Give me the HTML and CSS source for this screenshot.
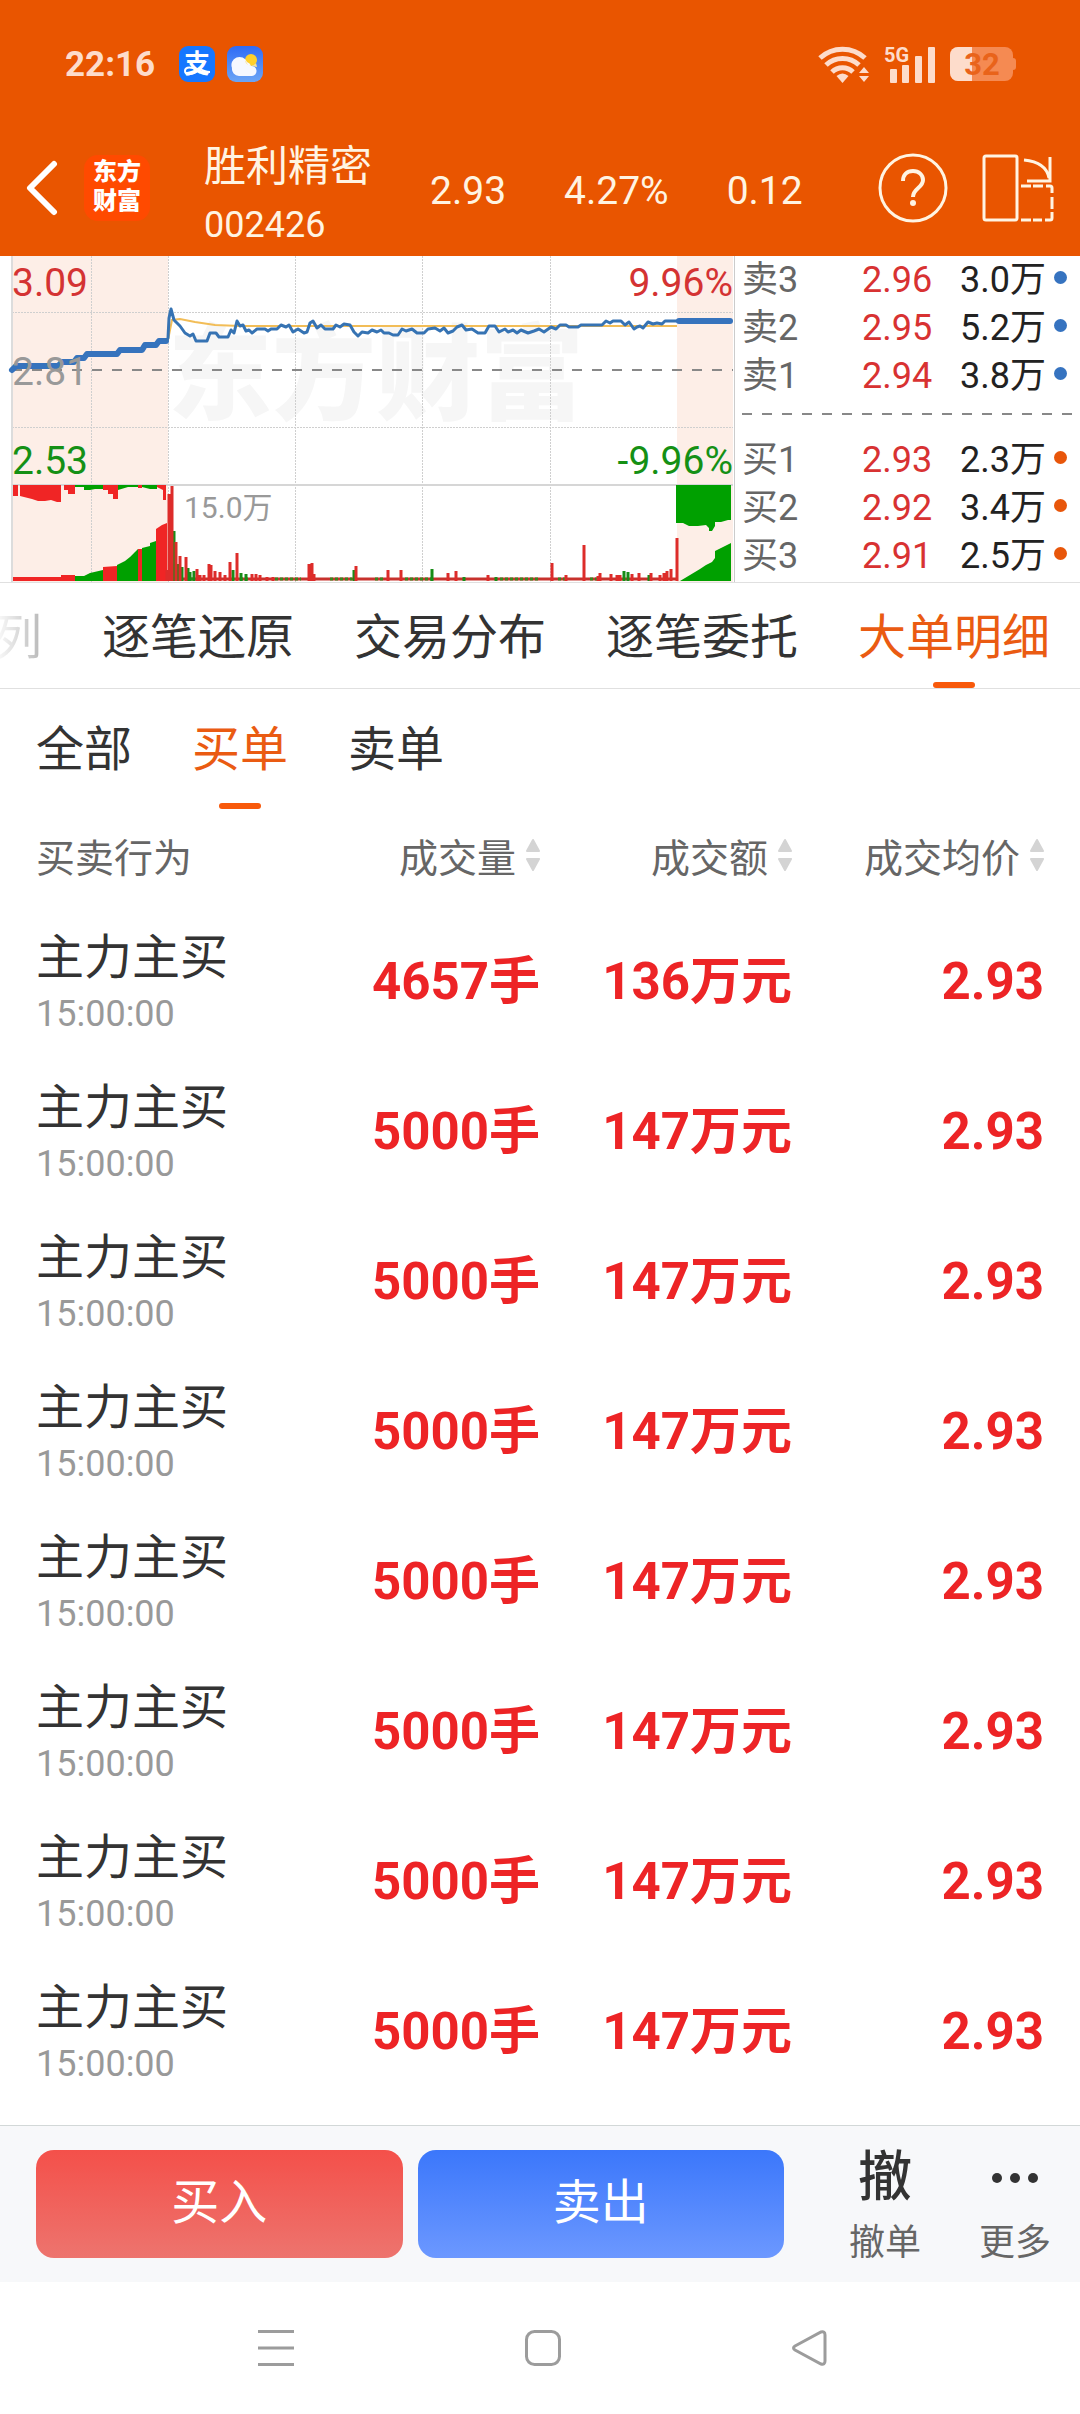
FILE: index.html
```html
<!DOCTYPE html>
<html lang="zh-CN">
<head>
  <meta charset="UTF-8">
  <meta name="viewport" content="width=device-width, initial-scale=1.0">
  <title>胜利精密 002426</title>
  <link rel="stylesheet" href="styles.css">
</head>
<body>

  <!-- 状态栏 -->
  <div class="status-bar">
    <span class="clock">22:16</span>
    <svg class="app-icon" viewBox="0 0 36 36" aria-hidden="true">
      <rect width="36" height="36" rx="9" fill="#1677ff"/>
      <text class="pay-mark" x="18" y="27" text-anchor="middle">支</text>
      <path d="M17 24c-3-3-11-4-11 1 0 5 9 4 14-2M20 22c4 3 7 4 11 4" fill="none" stroke="#fff" stroke-width="2"/>
    </svg>
    <svg class="app-icon" viewBox="0 0 36 36" aria-hidden="true">
      <defs>
        <linearGradient id="sky" x1="0" y1="0" x2="0" y2="1">
          <stop offset="0" stop-color="#2f6bf6"/>
          <stop offset="1" stop-color="#6ba5f5"/>
        </linearGradient>
      </defs>
      <rect width="36" height="36" rx="9" fill="url(#sky)"/>
      <circle cx="24" cy="14" r="6" fill="#ffd02c"/>
      <path d="M12 30a7 7 0 0 1-7-8 8 8 0 0 1 15-6 6 6 0 0 1 4 4 5 5 0 0 1 1 10z" fill="#f5f8ff"/>
      <path d="M18 14a6 6 0 0 0 11 3l1 4-5-1-4-1z" fill="#fbe49b"/>
    </svg>
    <div class="status-right">
      <svg width="52" height="38" viewBox="0 0 52 38" fill="none" stroke="#fddccb" stroke-width="5" stroke-linecap="butt" aria-hidden="true">
        <path d="M2 13a33 33 0 0 1 45 0"/>
        <path d="M8 20a24 24 0 0 1 33 0"/>
        <path d="M14 27a15 15 0 0 1 21 0"/>
        <path d="M24.500 38l-6-7q6-5 12 0z" fill="#fddccb" stroke="none"/>
        <path d="M46 22l5 6h-10zM46 37l5-6h-10z" fill="#fddccb" stroke="none"/>
      </svg>
      <svg class="signal" width="52" height="38" viewBox="0 0 52 38" fill="#fddccb" aria-hidden="true">
        <text class="net-mark" x="0" y="17">5G</text>
        <rect x="6" y="24" width="7" height="14" rx="1"/>
        <rect x="18" y="20" width="7" height="18" rx="1"/>
        <rect x="31" y="11" width="7" height="27" rx="1"/>
        <rect x="44" y="2" width="7" height="36" rx="1"/>
      </svg>
      <svg class="battery" width="66" height="34" viewBox="0 0 66 34" aria-hidden="true">
        <rect width="63" height="34" rx="8" fill="#f58a52"/>
        <path d="M63 11q3 0 3 3v6q0 3-3 3z" fill="#f58a52"/>
        <path d="M8 0h14v34H8a8 8 0 0 1-8-8V8a8 8 0 0 1 8-8z" fill="#fddccb"/>
        <text class="battery-text" x="32" y="28" text-anchor="middle">32</text>
      </svg>
    </div>
  </div>

  <!-- 顶部标题 -->
  <header class="header">
    <button class="icon-btn" aria-label="返回">
      <svg width="32" height="56" viewBox="0 0 32 56" fill="none" stroke="#fff" stroke-width="6" stroke-linecap="round" stroke-linejoin="round">
        <path d="M28 4L4 28l24 24"/>
      </svg>
    </button>
    <div class="logo">东方<br>财富</div>
    <div class="stock">
      <h1 class="stock-name">胜利精密</h1>
      <span class="stock-code">002426</span>
    </div>
    <div class="quote">
      <span>2.93</span>
      <span>4.27%</span>
      <span>0.12</span>
    </div>
    <div class="header-tools">
      <button class="icon-btn" aria-label="帮助">
        <svg width="70" height="70" viewBox="0 0 70 70" fill="none" stroke="#fff4e2" stroke-width="3">
          <circle cx="35" cy="35" r="33"/>
          <path d="M25 28c0-6 4-10 10-10s10 4 10 9c0 8-10 8-10 17" stroke-width="4"/>
          <circle cx="35" cy="50" r="3" fill="#fff4e2" stroke="none"/>
        </svg>
      </button>
      <button class="icon-btn" aria-label="横屏">
        <svg width="72" height="68" viewBox="0 0 72 68" fill="none" stroke="#fff4e2" stroke-width="3">
          <rect x="2" y="2" width="33" height="64" rx="2"/>
          <path d="M42 6q22 2 25 18M68 3v24H45"/>
          <path d="M39 32h10M51 32h10M64 32h4q2 0 2 2v5M70 43v12M70 58v6q0 2-2 2h-5M39 66h10M51 66h9"/>
        </svg>
      </button>
    </div>
  </header>

  <!-- 分时图和盘口 -->
  <section class="market">
    <svg class="chart" viewBox="0 0 734 326" role="img" aria-label="分时图">
      <rect x="12" y="0" width="156" height="326" fill="#fdeee7"/>
      <rect x="677" y="0" width="56" height="326" fill="#fdeee7"/>
      <text class="watermark" x="168" y="156">东方财富</text>

      <path d="M12 56.500H733M12 171.500H733M91.500 0V326M168.500 0V326M295.500 0V326M422.500 0V326M550.500 0V326" stroke="#cfcfcf" stroke-dasharray="2 1" fill="none"/>
      <path d="M12 0V326" stroke="#dcdcdc" stroke-width="2"/>
      <path d="M12 229H733" stroke="#d6d6d6" stroke-width="2"/>
      <path d="M12 114H733" stroke="#888" stroke-width="2" stroke-dasharray="10 10"/>

      <!-- 均价线 -->
      <path d="M168 84L172 64L180 63L195 66L215 69L240 70H677" fill="none" stroke="#f2bd57" stroke-width="2"/>
      <!-- 价格线 -->
      <path d="M12 114L16 110H58L62 106H74L77 102H84L87 98H117L120 94H142L145 89H156L159 85H166" fill="none" stroke="#3673bd" stroke-width="6" stroke-linejoin="round" stroke-linecap="round"/>
      <path d="M166 85L168 82L169 62L171 53L174 64L180 70L185 77L190 80L193 78L196 85H207L210 77H216L219 81H228L231 74L234 77L237 65L240 70L243 69L246 75L249 74L252 77L257 73H265L268 75L271 73H277L281 69L286 71L289 69L293 76L298 73L304 77L307 76L310 67L313 65L317 72L321 69L325 73H333L336 69L340 71L344 68L350 69L354 76L358 80L362 76L368 77L372 74L377 76L381 74L384 77H389L393 79H398L402 73L406 75L412 73L417 77H424L428 73L435 72L440 75L444 72L448 77L453 75L457 71L462 69L466 74L472 73L478 77H485L489 70H495L499 76L505 73L508 76L513 74L517 77L521 74L528 77L534 75L539 73L544 76L551 71L556 73L560 69H566L569 71H578L581 69H602L606 65L610 67L613 65H621L625 69L629 66L634 73L637 71L640 70L643 72L648 66L653 68L657 67L662 68L665 65H677" fill="none" stroke="#3673b3" stroke-width="3" stroke-linejoin="round"/>
      <path d="M679 65H730" stroke="#3673bd" stroke-width="6" stroke-linecap="round"/>

      <!-- 集合竞价：未匹配量 -->
      <path d="M13 229H18V240H13zM20 229H61V246H57L51 244L45 245H38L32 243L20 240zM64 229H75V238H68V234H64zM103 229H118V243H113V238H108V234H103zM138 229H142V232H138zM157 229H166V244H163V234L157 231z" fill="#f02525"/>
      <path d="M75 229H103V233H95L90 234H84V231H75zM118 229H138V231H128L118 234zM142 229H157V233H150L142 231zM676 229H731V264H728L721 266H715V270L712 275H709V272L706 269L698 270H689L683 267H676z" fill="#00a000"/>
      <!-- 成交量 -->
      <path d="M13 325V321H61V319H75V325zM103 325V311L117 310V325zM138 325V293H142V325zM156 325V273L162 269L167 267V325z" fill="#f02525"/>
      <path d="M75 325V320H84L90 317L103 314V325zM117 325V309L125 305L130 301L135 296L138 293V325zM142 325V292L150 290V287L156 285V325zM680 325L690 319L700 313L706 309L712 306L715 302V295L721 292L731 287V325z" fill="#00a000"/>
      <path d="M175 323H676" stroke="#c7322d" stroke-width="3"/>
      <path d="M191 323H197M240 323H250M275 323H301M330 323H352M375 323H384M405 323H431M500 323H540M558 323H566M590 323H598" stroke="#39861f" stroke-width="3" stroke-dasharray="3 2"/>
      <path d="M174 325V275M178 325V308M182 325V311M188 325V312M190 325V316M194 325V315M233 325V314M241 325V317M246 325V318M354 325V314M432 325V313M464 325V321M496 325V321M624 325V315M628 325V316M649 325V319" stroke="#178c17" stroke-width="3"/>
      <path d="M167 325V314M169 325V238M172 325V230M176 325V286M180 325V300M186 325V301M197 325V313M200 325V319M204 325V319M209 325V308M211 325V309M215 325V315M220 325V316M225 325V319M230 325V306M237 325V297M252 325V318M256 325V318M260 325V319M267 325V321M273 325V321M309 325V308M312 325V307M314 325V318M356 325V310M388 325V314M401 325V314M448 325V317M456 325V315M488 325V319M552 325V307M566 325V319M584 325V289M598 325V320M600 325V317M611 325V318M617 325V319M620 325V319M632 325V318M639 325V317M651 325V317M660 325V319M664 325V317M667 325V315M671 325V313M677 325V282" stroke="#dd2c2a" stroke-width="3"/>

      <text class="axis up" x="12" y="40">3.09</text>
      <text class="axis flat" x="12" y="129">2.81</text>
      <text class="axis down" x="12" y="218">2.53</text>
      <text class="axis up" x="733" y="40" text-anchor="end">9.96%</text>
      <text class="axis down" x="733" y="218" text-anchor="end">-9.96%</text>
      <text class="axis-small" x="184" y="262">15.0万</text>
    </svg>

    <div class="book">
      <div class="book-row"><span class="side">卖3</span><span class="price">2.96</span><span class="vol">3.0万</span><i class="dot sell"></i></div>
      <div class="book-row"><span class="side">卖2</span><span class="price">2.95</span><span class="vol">5.2万</span><i class="dot sell"></i></div>
      <div class="book-row"><span class="side">卖1</span><span class="price">2.94</span><span class="vol">3.8万</span><i class="dot sell"></i></div>
      <div class="book-split"></div>
      <div class="book-row"><span class="side">买1</span><span class="price">2.93</span><span class="vol">2.3万</span><i class="dot buy"></i></div>
      <div class="book-row"><span class="side">买2</span><span class="price">2.92</span><span class="vol">3.4万</span><i class="dot buy"></i></div>
      <div class="book-row"><span class="side">买3</span><span class="price">2.91</span><span class="vol">2.5万</span><i class="dot buy"></i></div>
    </div>
  </section>

  <!-- 一级标签 -->
  <nav class="tabs">
    <a href="#" class="tab faded">列</a>
    <a href="#" class="tab">逐笔还原</a>
    <a href="#" class="tab">交易分布</a>
    <a href="#" class="tab">逐笔委托</a>
    <a href="#" class="tab active">大单明细</a>
  </nav>

  <!-- 二级标签 -->
  <nav class="subtabs">
    <a href="#" class="tab">全部</a>
    <a href="#" class="tab active">买单</a>
    <a href="#" class="tab">卖单</a>
  </nav>

  <main class="content">
    <table class="orders">
      <thead>
        <tr>
          <th>买卖行为</th>
          <th><button class="sort">成交量<svg width="14" height="34" viewBox="0 0 14 34"><path d="M7 2l6 11H1zM7 32l6-11H1z"/></svg></button></th>
          <th><button class="sort">成交额<svg width="14" height="34" viewBox="0 0 14 34"><path d="M7 2l6 11H1zM7 32l6-11H1z"/></svg></button></th>
          <th><button class="sort">成交均价<svg width="14" height="34" viewBox="0 0 14 34"><path d="M7 2l6 11H1zM7 32l6-11H1z"/></svg></button></th>
        </tr>
      </thead>
      <tbody>
        <tr>
          <td><div class="action">主力主买</div><div class="time">15:00:00</div></td>
          <td>4657手</td>
          <td>136万元</td>
          <td>2.93</td>
        </tr>
        <tr>
          <td><div class="action">主力主买</div><div class="time">15:00:00</div></td>
          <td>5000手</td>
          <td>147万元</td>
          <td>2.93</td>
        </tr>
        <tr>
          <td><div class="action">主力主买</div><div class="time">15:00:00</div></td>
          <td>5000手</td>
          <td>147万元</td>
          <td>2.93</td>
        </tr>
        <tr>
          <td><div class="action">主力主买</div><div class="time">15:00:00</div></td>
          <td>5000手</td>
          <td>147万元</td>
          <td>2.93</td>
        </tr>
        <tr>
          <td><div class="action">主力主买</div><div class="time">15:00:00</div></td>
          <td>5000手</td>
          <td>147万元</td>
          <td>2.93</td>
        </tr>
        <tr>
          <td><div class="action">主力主买</div><div class="time">15:00:00</div></td>
          <td>5000手</td>
          <td>147万元</td>
          <td>2.93</td>
        </tr>
        <tr>
          <td><div class="action">主力主买</div><div class="time">15:00:00</div></td>
          <td>5000手</td>
          <td>147万元</td>
          <td>2.93</td>
        </tr>
        <tr>
          <td><div class="action">主力主买</div><div class="time">15:00:00</div></td>
          <td>5000手</td>
          <td>147万元</td>
          <td>2.93</td>
        </tr>
      </tbody>
    </table>
  </main>

  <!-- 底部交易栏 -->
  <footer class="trade-bar">
    <div class="trade-buttons">
      <button class="trade-btn buy-btn">买入</button>
      <button class="trade-btn sell-btn">卖出</button>
    </div>
    <button class="tool">
      <span class="tool-icon">撤</span>
      <span class="tool-label">撤单</span>
    </button>
    <button class="tool">
      <span class="tool-icon">
        <svg width="46" height="10" viewBox="0 0 46 10" fill="#333"><circle cx="5" cy="5" r="5"/><circle cx="23" cy="5" r="5"/><circle cx="41" cy="5" r="5"/></svg>
      </span>
      <span class="tool-label">更多</span>
    </button>
  </footer>

  <!-- 系统导航 -->
  <div class="system-nav">
    <button class="icon-btn" aria-label="最近任务">
      <svg width="36" height="38" viewBox="0 0 36 38" stroke="#9c9c9c" stroke-width="3"><path d="M0 2.500h36M0 19h36M0 35.500h36"/></svg>
    </button>
    <button class="icon-btn" aria-label="主屏幕">
      <svg width="36" height="38" viewBox="0 0 36 38" fill="none" stroke="#9c9c9c" stroke-width="3"><rect x="1.500" y="2.500" width="33" height="33" rx="8"/></svg>
    </button>
    <button class="icon-btn" aria-label="返回上一页">
      <svg width="36" height="38" viewBox="0 0 36 38" fill="none" stroke="#9c9c9c" stroke-width="3"><path d="M3 17L29 3q4-1 4 3v26q0 4-4 3L3 21q-3-2 0-4z"/></svg>
    </button>
  </div>

</body>
</html>
```
FILE: styles.css
```css
* {
  box-sizing: border-box;
}

body {
  margin: 0;
  min-height: 100vh;
  display: flex;
  flex-direction: column;
  background-color: #fff;
  color: #333;
  font-family: Roboto, 'Noto Sans CJK SC', sans-serif;
}

button {
  padding: 0;
  border: none;
  background: none;
  color: inherit;
  font: inherit;
  cursor: pointer;
}

a {
  color: inherit;
  text-decoration: none;
}

svg {
  display: block;
}

/* 状态栏 */
.status-bar {
  display: flex;
  align-items: center;
  height: 120px;
  padding: 8px 64px 0 65px;
  background-color: #e95500;
}

.clock {
  margin-right: 24px;
  color: #fddccb;
  font-size: 35px;
  font-weight: 700;
}

.app-icon {
  width: 36px;
  height: 36px;
  margin-right: 12px;
}

.pay-mark {
  fill: #fff;
  font-size: 26px;
  font-weight: 700;
}

.status-right {
  display: flex;
  align-items: center;
  gap: 14px;
  margin-left: auto;
}

.signal,
.battery {
  overflow: visible;
}

.net-mark {
  font-size: 20px;
  font-weight: 700;
}

.battery-text {
  fill: #e9631a;
  font-size: 31px;
  font-weight: 700;
}

/* 顶部标题 */
.header {
  display: flex;
  align-items: center;
  height: 136px;
  padding: 0 26px;
  background-color: #e95500;
  color: #fff4e2;
}

.logo {
  width: 66px;
  height: 66px;
  margin-left: 26px;
  padding-top: 3px;
  border-radius: 14px;
  background-color: #ff4a00;
  color: #fff;
  font-size: 24px;
  font-weight: 900;
  line-height: 29px;
  text-align: center;
}

.stock {
  display: flex;
  flex-direction: column;
  margin-left: 54px;
  padding-top: 18px;
}

.stock-name {
  margin: 0;
  font-size: 42px;
  font-weight: 400;
  line-height: 56px;
}

.stock-code {
  font-size: 36px;
  line-height: 60px;
}

.quote {
  flex: 1;
  display: flex;
  gap: 58px;
  margin-left: 58px;
  padding-top: 5px;
  font-size: 39px;
}

.header-tools {
  display: flex;
  align-items: center;
  gap: 34px;
}

/* 行情 */
.market {
  display: grid;
  grid-template-columns: 734fr 346fr;
  border-bottom: 1px solid #e0e0e0;
}

.chart {
  width: 100%;
  height: auto;
}

.watermark {
  fill: #f6f6f6;
  font-size: 104px;
  font-weight: 900;
}

.axis {
  font-size: 39px;
}

.axis-small {
  fill: #999;
  font-size: 30px;
}

.up {
  fill: #d43333;
}

.down {
  fill: #159015;
}

.flat {
  fill: #999;
}

.book {
  padding-left: 7px;
  border-left: 1px solid #ccc;
  font-size: 36px;
  line-height: 48px;
}

.book-row {
  display: grid;
  grid-template-columns: 1fr 98px 94px 26px;
  align-items: center;
  height: 48px;
}

.side {
  color: #666;
}

.price {
  color: #d83232;
}

.vol {
  color: #222;
}

.dot {
  width: 13px;
  height: 13px;
  margin-bottom: 6px;
  border-radius: 50%;
}

.sell {
  background-color: #3673c0;
}

.buy {
  background-color: #e8560a;
}

.book-split {
  height: 36px;
  margin-right: 8px;
  background: repeating-linear-gradient(to right, #888 0 10px, transparent 10px 20px) 0 13px / 100% 2px no-repeat;
}

/* 标签 */
.tabs,
.subtabs {
  display: flex;
  gap: 60px;
  font-size: 48px;
  white-space: nowrap;
}

.tabs {
  justify-content: flex-end;
  padding: 4px 30px 0 0;
  overflow: hidden;
  border-bottom: 1px solid #e0e0e0;
  line-height: 101px;
}

.subtabs {
  padding: 2px 0 0 36px;
  line-height: 118px;
}

.tab {
  position: relative;
  flex: none;
}

.tab.active {
  color: #ea5b12;
}

.tab.active::after {
  content: '';
  position: absolute;
  left: 50%;
  bottom: 0;
  width: 42px;
  height: 6px;
  margin-left: -21px;
  border-radius: 3px;
  background-color: #f8590b;
}

.faded {
  mask-image: linear-gradient(to right, transparent, rgba(0, 0, 0, 0.35));
}

/* 大单列表 */
.content {
  flex: 1;
  padding: 0 36px 18px;
}

.orders {
  width: 100%;
  table-layout: fixed;
  border-collapse: collapse;
}

.orders th {
  height: 98px;
  padding: 0 0 6px;
  color: #666;
  font-size: 39px;
  font-weight: 400;
  text-align: right;
  white-space: nowrap;
}

.orders td {
  height: 150px;
  padding: 0;
  color: #ed2426;
  font-size: 51px;
  font-weight: 700;
  line-height: 60px;
  text-align: right;
  white-space: nowrap;
}

.orders th:first-child,
.orders td:first-child {
  text-align: left;
}

.orders td:first-child {
  padding-top: 4px;
}

.sort {
  display: inline-flex;
  align-items: center;
  gap: 10px;
}

.sort svg {
  fill: #d4d4d4;
  stroke: #d4d4d4;
  stroke-width: 2;
  stroke-linejoin: round;
}

.action {
  color: #333;
  font-size: 48px;
  font-weight: 400;
  line-height: 60px;
}

.time {
  color: #999;
  font-size: 36px;
  font-weight: 400;
  line-height: 52px;
}

/* 底部交易栏 */
.trade-bar {
  display: flex;
  align-items: center;
  height: 157px;
  padding-left: 36px;
  border-top: 1px solid #d2d8d8;
  background-color: #f7f8fa;
}

.trade-buttons {
  flex: 1;
  display: flex;
  gap: 15px;
  margin-right: 36px;
}

.trade-btn {
  flex: 1;
  height: 108px;
  padding-bottom: 2px;
  border-radius: 18px;
  color: #fff;
  font-size: 48px;
  line-height: 60px;
}

.buy-btn {
  background: linear-gradient(#f4504a, #ed746e);
}

.sell-btn {
  background: linear-gradient(#3b77fb, #6c98ff);
}

.tool {
  display: flex;
  flex-direction: column;
  align-items: center;
  gap: 14px;
  width: 130px;
  padding-top: 4px;
}

.tool-icon {
  display: flex;
  align-items: center;
  height: 60px;
  font-size: 54px;
  font-weight: 500;
  line-height: 60px;
}

.tool-label {
  color: #666;
  font-size: 36px;
  line-height: 42px;
}

/* 系统导航 */
.system-nav {
  display: flex;
  justify-content: center;
  align-items: center;
  gap: 231px;
  height: 132px;
  padding-left: 6px;
}
```
